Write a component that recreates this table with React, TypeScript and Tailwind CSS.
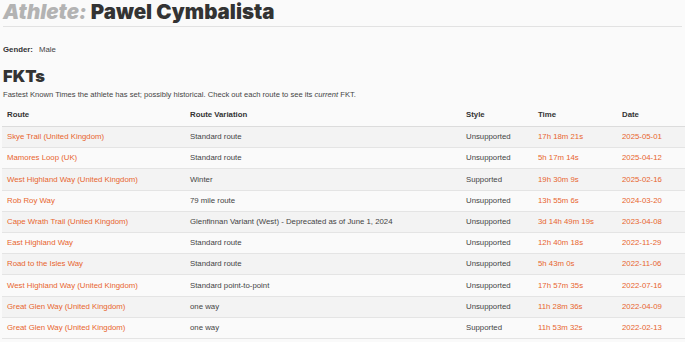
import React from "react";

const rows = [
  ["Skye Trail (United Kingdom)", "Standard route", "Unsupported", "17h 18m 21s", "2025-05-01"],
  ["Mamores Loop (UK)", "Standard route", "Unsupported", "5h 17m 14s", "2025-04-12"],
  ["West Highland Way (United Kingdom)", "Winter", "Supported", "19h 30m 9s", "2025-02-16"],
  ["Rob Roy Way", "79 mile route", "Unsupported", "13h 55m 6s", "2024-03-20"],
  ["Cape Wrath Trail (United Kingdom)", "Glenfinnan Variant (West) - Deprecated as of June 1, 2024", "Unsupported", "3d 14h 49m 19s", "2023-04-08"],
  ["East Highland Way", "Standard route", "Unsupported", "12h 40m 18s", "2022-11-29"],
  ["Road to the Isles Way", "Standard route", "Unsupported", "5h 43m 0s", "2022-11-06"],
  ["West Highland Way (United Kingdom)", "Standard point-to-point", "Unsupported", "17h 57m 35s", "2022-07-16"],
  ["Great Glen Way (United Kingdom)", "one way", "Unsupported", "11h 28m 36s", "2022-04-09"],
  ["Great Glen Way (United Kingdom)", "one way", "Supported", "11h 53m 32s", "2022-02-13"],
];

const grid = "grid grid-cols-[183px_276px_72px_84px_1fr] items-center";

export default function App() {
  return (
    <div className="min-h-[342px] w-[685px] overflow-hidden bg-[#fafafa] text-[#444]" style={{ fontFamily: '"Liberation Sans", Arial, sans-serif' }}>
      <div className="px-[3px]">
        <h1 className="h-[27px] border-b border-[#e2e2e2] text-[20.5px] leading-[24px] font-black text-[#333]" style={{ fontFamily: 'Inter, "Liberation Sans", sans-serif' }}>
          <span className="italic text-[#b3b3b3]">Athlete:</span> Pawel Cymbalista
        </h1>
        <div className="mt-[18px] flex h-[10px] items-center text-[7.8px]">
          <span className="font-bold text-[#333]">Gender:</span>
          <span className="ml-[6px]">Male</span>
        </div>
        <h2 className="mt-[11px] h-[20px] text-[16.5px] leading-[20px] font-black text-[#333]" style={{ fontFamily: 'Inter, "Liberation Sans", sans-serif' }}>FKTs</h2>
        <p className="mt-[4px] h-[10px] text-[7.6px] leading-[10px]">
          Fastest Known Times the athlete has set; possibly historical. Check out each route to see its <em>current</em> FKT.
        </p>
      </div>
      <div className="mt-[4px] ml-[2px] w-[700px] text-[7.8px]">
        <div className={`${grid} h-[23px] border-b border-[#dcdcdc] font-bold text-[#333]`}>
          <div className="px-[5px]">Route</div>
          <div className="px-[5px]">Route Variation</div>
          <div className="px-[5px]">Style</div>
          <div className="px-[5px]">Time</div>
          <div className="px-[5px]">Date</div>
        </div>
        {rows.map((r, i) => (
          <div key={i} className={`${grid} h-[21.2px] border-b border-[#e4e4e4] ${i % 2 === 0 ? "bg-[#f3f3f3]" : "bg-[#fafafa]"}`}>
            <div className="px-[5px] whitespace-nowrap text-[#e8652e]">{r[0]}</div>
            <div className="px-[5px] whitespace-nowrap">{r[1]}</div>
            <div className="px-[5px] whitespace-nowrap">{r[2]}</div>
            <div className="px-[5px] whitespace-nowrap text-[#e8652e]">{r[3]}</div>
            <div className="px-[5px] whitespace-nowrap text-[#e8652e]">{r[4]}</div>
          </div>
        ))}
      </div>
    </div>
  );
}
